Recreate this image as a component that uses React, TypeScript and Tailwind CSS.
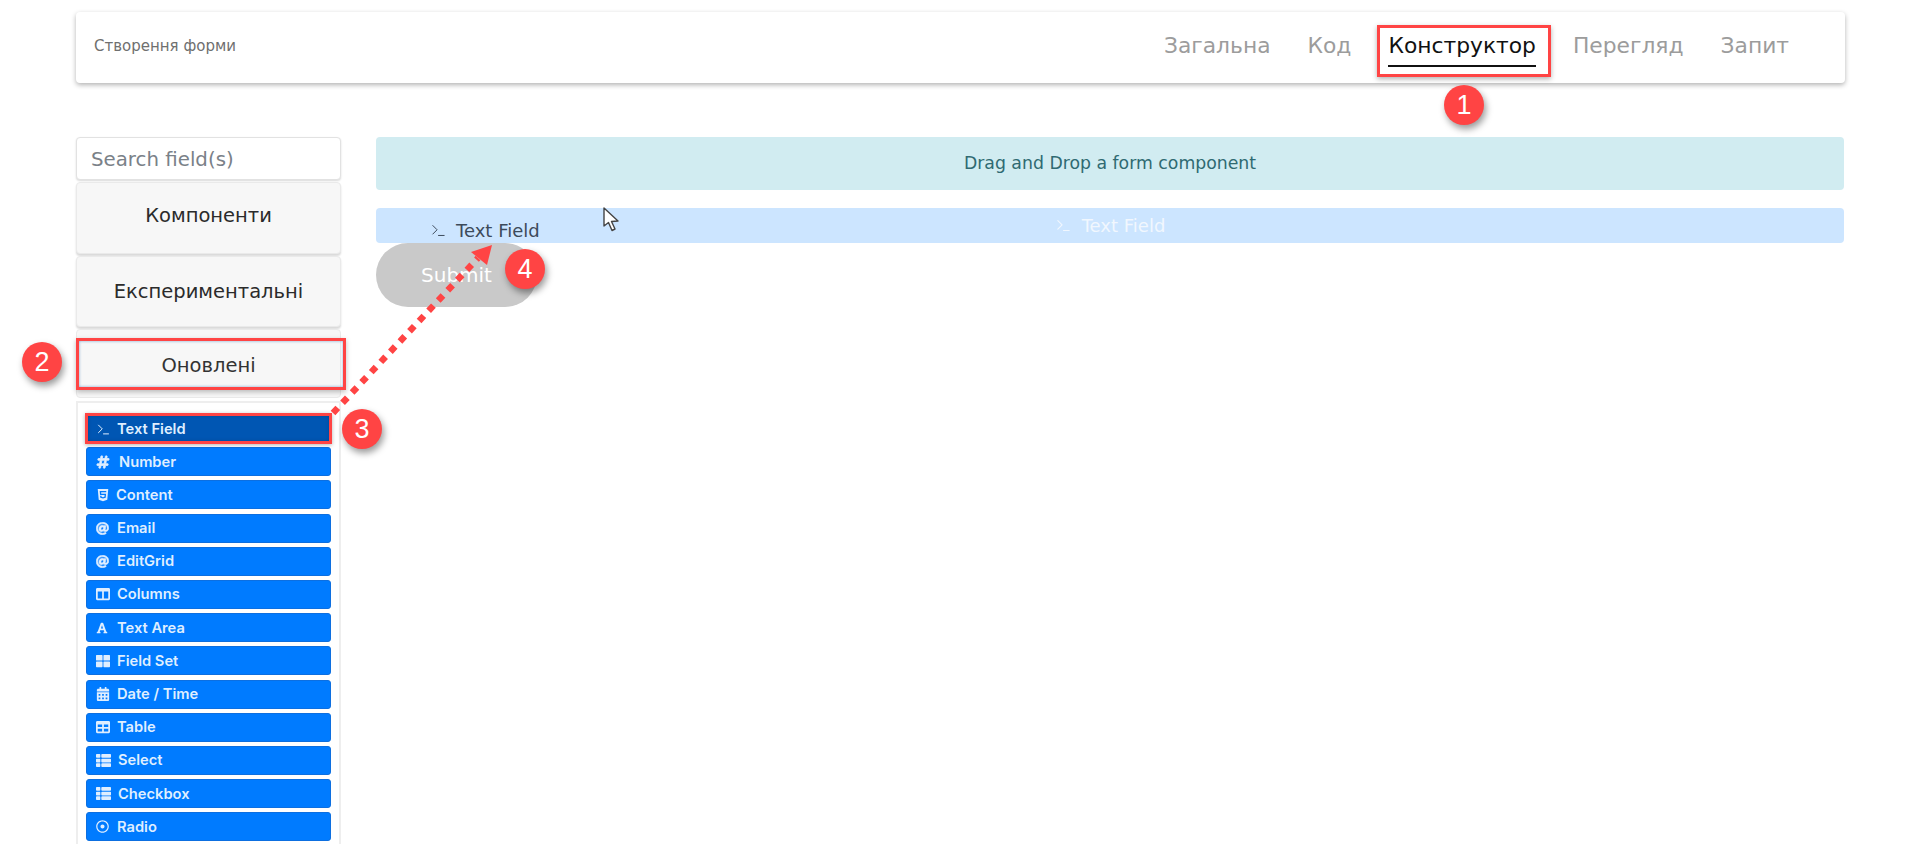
import React from "react";
import { Terminal } from "lucide-react";
import {
  FaHashtag,
  FaHtml5,
  FaAt,
  FaColumns,
  FaFont,
  FaThLarge,
  FaCalendarAlt,
  FaTable,
  FaThList,
  FaRegDotCircle,
} from "react-icons/fa";

const font = { fontFamily: "'DejaVu Sans', sans-serif" };
const inter = { fontFamily: "Inter, sans-serif" };

function Term({ size, width = 1.6 }: { size: number; width?: number }) {
  return <Terminal size={size} strokeWidth={width} />;
}

const items: { label: string; icon: React.ReactNode; cls?: string }[] = [
  { label: "Number", icon: <FaHashtag size={14} stroke="currentColor" strokeWidth={30} />, cls: "w-[23px]" },
  { label: "Content", icon: <FaHtml5 size={14} />, cls: "w-[20px]" },
  { label: "Email", icon: <FaAt size={13} stroke="currentColor" strokeWidth={20} /> },
  { label: "EditGrid", icon: <FaAt size={13} stroke="currentColor" strokeWidth={20} /> },
  { label: "Columns", icon: <FaColumns size={14} /> },
  { label: "Text Area", icon: <FaFont size={12} /> },
  { label: "Field Set", icon: <FaThLarge size={14} /> },
  { label: "Date / Time", icon: <FaCalendarAlt size={14} /> },
  { label: "Table", icon: <FaTable size={14} /> },
  { label: "Select", icon: <FaThList size={15} />, cls: "w-[22px]" },
  { label: "Checkbox", icon: <FaThList size={15} />, cls: "w-[22px]" },
  { label: "Radio", icon: <FaRegDotCircle size={13} /> },
];

function Badge({ n, cls }: { n: number; cls: string }) {
  return (
    <div
      className={`absolute flex h-[40px] w-[40px] items-center justify-center rounded-full bg-[#ff4444] text-[27px] text-white shadow-[2px_4px_7px_rgba(0,0,0,0.4)] ${cls}`}
      style={{ fontFamily: "'Liberation Sans', sans-serif" }}
    >
      {n}
    </div>
  );
}

function NavItem({ label, active }: { label: string; active?: boolean }) {
  return (
    <div
      className={`h-[34px] whitespace-nowrap border-b-2 pt-[1px] text-[21.8px] leading-[24px] ${
        active ? "border-[#111] text-[#111]" : "border-transparent text-[#9c9c9c]"
      }`}
    >
      {label}
    </div>
  );
}

export default function App() {
  return (
    <div className="relative h-[844px] w-[1920px] overflow-hidden bg-white pl-[76px] pr-[75px] pt-[12px]" style={font}>
      <header className="flex h-[71px] items-start justify-between rounded-[4px] bg-white pl-[18px] pr-[56px] shadow-[0_2px_5px_rgba(0,0,0,0.3)]">
        <div className="mt-[25px] text-[15px] leading-[18px] text-[#6f6f6f]">Створення форми</div>
        <nav className="mt-[21px] flex gap-[37px]">
          <NavItem label="Загальна" />
          <NavItem label="Код" />
          <NavItem label="Конструктор" active />
          <NavItem label="Перегляд" />
          <NavItem label="Запит" />
        </nav>
      </header>

      <main className="mt-[54px] flex gap-[35px]">
        <aside className="flex w-[265px] shrink-0 flex-col">
          <input
            readOnly
            placeholder="Search field(s)"
            className="h-[43px] rounded-[4px] border border-[#e2e2e2] bg-white px-[14px] pt-[1px] text-[19.8px] text-[#6c757d] shadow-[0_1px_2px_rgba(0,0,0,0.15)] outline-none placeholder:text-[#7a8188]"
          />
          <div className="mt-[2px] flex h-[72px] items-center justify-center rounded-[4px] border border-[#eaeaea] bg-[#f7f7f7] pb-[4px] text-[19.5px] text-[#2b2b2b] shadow-[0_2px_2px_rgba(0,0,0,0.15)]">
            Компоненти
          </div>
          <div className="mt-[2px] flex h-[71px] items-center justify-center rounded-[4px] border border-[#eaeaea] bg-[#f7f7f7] text-[19.5px] text-[#2b2b2b] shadow-[0_2px_2px_rgba(0,0,0,0.15)]">
            Експериментальні
          </div>
          <div className="mt-[2px] flex h-[69px] items-center justify-center rounded-[4px] border border-[#eaeaea] bg-[#f7f7f7] pt-[5px] text-[19.5px] text-[#333]">
            Оновлені
          </div>
          <div className="mt-[3px] flex h-[460px] flex-col gap-[4.2px] border-2 border-[#eeeeee] px-[8px] pt-[11px]" style={inter}>
            <div className="flex h-[29px] shrink-0 items-center bg-[#0056b3] pl-[10px] pt-[1px] text-[14.7px] font-semibold text-[#dfeeff] shadow-[inset_0_0_5px_rgba(0,0,0,0.4)]">
              <span className="flex w-[21px] shrink-0 items-center">
                <Term size={15} />
              </span>
              Text Field
            </div>
            {items.map((it) => (
              <div
                key={it.label}
                className="flex h-[29px] shrink-0 items-center rounded-[3px] border border-[#0d6fe0] bg-[#007bff] pl-[9px] text-[14.7px] font-semibold text-[#dfeeff]"
              >
                <span className={`flex shrink-0 items-center ${it.cls ?? "w-[21px]"}`}>{it.icon}</span>
                {it.label}
              </div>
            ))}
          </div>
        </aside>

        <section className="mr-[1px] flex min-w-0 flex-1 flex-col">
          <div className="flex h-[53px] items-center justify-center rounded-[4px] bg-[#d1ecf1] pt-[1px] text-[17.3px] text-[#2f6a72]">
            Drag and Drop a form component
          </div>
          <div className="mt-[18px] flex h-[35px] items-center justify-center gap-[10px] rounded-[4px] bg-[#cce5ff] pb-[1px] text-[18px] text-[#f1f7fe]">
            <Term size={17} />
            Text Field
          </div>
          <div className="flex h-[64px] w-[161px] items-center justify-center rounded-full bg-[#c9c9c9] text-[20px] text-white">
            Submit
          </div>
        </section>
      </main>

      {/* dragged row */}
      <div className="absolute left-[430px] top-[218px] flex h-[24px] items-center gap-[9px] text-[18px] text-[#3c4a5a]">
        <Term size={17} width={1.4} />
        Text Field
      </div>

      {/* mouse pointer */}
      <svg className="absolute left-[602px] top-[207px]" width="18" height="26" viewBox="0 0 18 26">
        <path d="M2 1 L2 19 L6.5 15.5 L10 23.5 L13 22 L9.5 14.5 L16 14 Z" fill="#fff" stroke="#444" strokeWidth="1.4" strokeLinejoin="round" />
      </svg>

      {/* red highlights */}
      <div className="absolute left-[1377px] top-[25px] h-[52px] w-[174px] border-[3px] border-[#ff4444] shadow-[0_2px_5px_rgba(0,0,0,0.3)]" />
      <div className="absolute left-[76px] top-[338px] h-[52px] w-[270px] border-[3px] border-[#ff4444] shadow-[0_2px_5px_rgba(0,0,0,0.25),inset_0_0_3px_rgba(70,130,190,0.7)]" />
      <div className="absolute left-[85px] top-[413px] h-[31px] w-[247px] border-[3px] border-[#ff4444] shadow-[0_1px_4px_rgba(0,0,0,0.3)]" />

      {/* dotted arrow */}
      <svg className="absolute left-0 top-0 pointer-events-none" width="1920" height="844" viewBox="0 0 1920 844">
        <line x1="333" y1="413" x2="478" y2="258" stroke="#ff4444" strokeWidth="6.5" strokeDasharray="7 7" />
        <polygon points="492,245 471,252 487,265" fill="#ff4444" />
      </svg>

      <Badge n={1} cls="left-[1444px] top-[85px]" />
      <Badge n={2} cls="left-[22px] top-[342px]" />
      <Badge n={3} cls="left-[342px] top-[409px]" />
      <Badge n={4} cls="left-[505px] top-[249px]" />
    </div>
  );
}
